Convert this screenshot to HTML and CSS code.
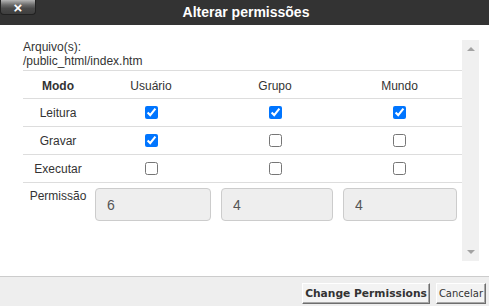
FILE: index.html
```html
<!DOCTYPE html>
<html lang="pt">
<head>
<meta charset="utf-8">
<title>Alterar permissões</title>
<link rel="stylesheet" href="styles.css">
</head>
<body>
<div class="dialog">
  <div class="titlebar">
    <button class="close" type="button">×</button>
    <span class="title">Alterar permissões</span>
  </div>
  <div class="content">
    <div class="scroll">
      <div class="main">
        <div class="file">Arquivo(s):<br>/public_html/index.htm</div>
        <div class="table">
          <div class="row head">
            <div class="cell mode"><b>Modo</b></div>
            <div class="cell">Usuário</div>
            <div class="cell">Grupo</div>
            <div class="cell">Mundo</div>
          </div>
          <div class="row">
            <div class="cell mode">Leitura</div>
            <div class="cell"><input type="checkbox" checked></div>
            <div class="cell"><input type="checkbox" checked></div>
            <div class="cell"><input type="checkbox" checked></div>
          </div>
          <div class="row">
            <div class="cell mode">Gravar</div>
            <div class="cell"><input type="checkbox" checked></div>
            <div class="cell"><input type="checkbox"></div>
            <div class="cell"><input type="checkbox"></div>
          </div>
          <div class="row">
            <div class="cell mode">Executar</div>
            <div class="cell"><input type="checkbox"></div>
            <div class="cell"><input type="checkbox"></div>
            <div class="cell"><input type="checkbox"></div>
          </div>
          <div class="row perm">
            <div class="cell mode label">Permissão</div>
            <div class="cell field f1"><input class="num" type="text" value="6" readonly></div>
            <div class="cell field f2"><input class="num" type="text" value="4" readonly></div>
            <div class="cell field f3"><input class="num" type="text" value="4" readonly></div>
          </div>
        </div>
      </div>
      <div class="scrollbar">
        <span class="arrow up"></span>
        <span class="arrow down"></span>
      </div>
    </div>
  </div>
  <div class="footer">
    <button class="btn primary" type="button">Change Permissions</button>
    <button class="btn" type="button">Cancelar</button>
  </div>
</div>
</body>
</html>
```

FILE: styles.css
```css
* { box-sizing: border-box; }
html, body { margin: 0; padding: 0; }
body {
  width: 489px;
  height: 306px;
  overflow: hidden;
  background: #fff;
  font-family: "Liberation Sans", Arial, sans-serif;
  font-size: 12px;
  color: #333;
}
.dialog {
  display: flex;
  flex-direction: column;
  height: 306px;
}
.titlebar {
  position: relative;
  height: 25px;
  background: #333;
  display: flex;
  align-items: center;
  justify-content: center;
}
.title {
  color: #fff;
  font-weight: bold;
  font-size: 14px;
  line-height: 16px;
  margin-left: 3px;
  margin-top: -1px;
}
.close {
  position: absolute;
  left: 0;
  top: 0;
  width: 36px;
  height: 15px;
  padding: 0;
  border: 1px solid #222;
  border-top: none;
  border-radius: 0 0 4px 4px;
  background: linear-gradient(#b5b5b5 0%, #6a6a6a 35%, #4a4a4a 60%, #3e3e3e 100%);
  color: #fff;
  font-family: "Liberation Sans", Arial, sans-serif;
  font-weight: bold;
  font-size: 15px;
  line-height: 13px;
  text-align: center;
}
.content {
  flex: 1;
  padding: 15px 10px 15px 23px;
  display: flex;
}
.scroll {
  flex: 1;
  display: flex;
}
.main {
  flex: 1;
  display: flex;
  flex-direction: column;
}
.file {
  line-height: 14px;
  color: #333;
}
.table {
  margin-top: 2px;
}
.row {
  display: grid;
  grid-template-columns: 66px 124px 124px 125px;
  height: 28px;
  border-top: 1px solid #ddd;
}
.cell {
  display: flex;
  align-items: center;
  justify-content: center;
  text-align: center;
  line-height: 14px;
}
.head .cell { padding-top: 2px; }
.head b { color: #333; }
.row input[type="checkbox"] {
  width: 13px;
  height: 13px;
  margin: 0;
  accent-color: #0075ff;
}
.row .cell.mode { padding-left: 4px; }
.perm {
  height: auto;
  align-items: start;
}
.perm .label {
  padding-top: 6px;
  align-items: flex-start;
  padding-left: 6px;
}
.field {
  padding-top: 5px;
  justify-content: flex-start;
}
.f1 { padding-left: 6px; padding-right: 2px; }
.f2 { padding-left: 8px; padding-right: 4px; }
.f3 { padding-left: 6px; padding-right: 5px; }
.num {
  width: 100%;
  height: 33px;
  margin: 0;
  border: 1px solid #ccc;
  border-radius: 4px;
  background: #eee;
  color: #555;
  font-family: "Liberation Sans", Arial, sans-serif;
  font-size: 14px;
  padding: 0 11px;
}
.scrollbar {
  width: 17px;
  background: #f0f0f0;
  display: flex;
  flex-direction: column;
  justify-content: space-between;
  align-items: center;
  padding: 7px 0 7px 1px;
}
.arrow {
  width: 0;
  height: 0;
  border-left: 4px solid transparent;
  border-right: 4px solid transparent;
}
.arrow.up { border-bottom: 4px solid #a3a3a3; }
.arrow.down { border-top: 4px solid #a3a3a3; }
.footer {
  height: 30px;
  border-top: 1px solid #ccc;
  background: #eee;
  display: flex;
  justify-content: flex-end;
  align-items: flex-start;
  gap: 6px;
  padding: 6px 3px 0 0;
}
.btn {
  height: 21px;
  margin: 0;
  padding: 0 2px;
  background: #f3f3f3;
  border: 1px solid;
  border-color: #fff #6e6e6e #6e6e6e #fff;
  box-shadow: inset -1px -1px 0 #a8a8a8;
  font-family: "DejaVu Sans", Verdana, sans-serif;
  font-size: 10px;
  color: #333;
  line-height: 19px;
}
.btn.primary { font-weight: bold; font-size: 10.7px; }
```
